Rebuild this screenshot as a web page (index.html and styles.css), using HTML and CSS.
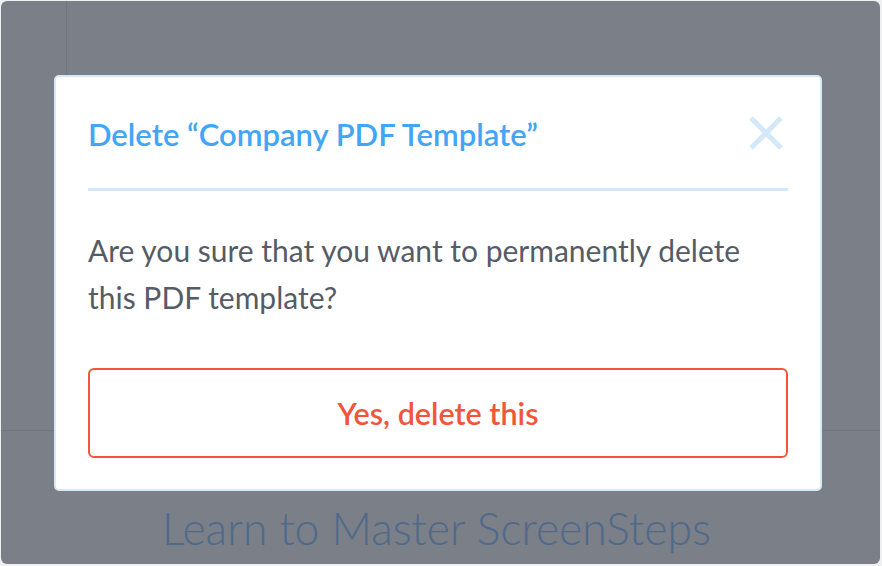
FILE: index.html
```html
<!DOCTYPE html>
<html>
<head>
<meta charset="utf-8">
<link rel="stylesheet" href="styles.css">
</head>
<body>
<div class="frame">
  <div class="page-top">
    <div class="sidebar"></div>
    <div class="main"></div>
  </div>
  <div class="page-bottom">
    <h1 class="hero">Learn to Master ScreenSteps</h1>
  </div>
  <div class="modal">
    <div class="modal-header">
      <h2 class="modal-title">Delete “Company PDF Template”</h2>
      <button class="close" aria-label="Close">
        <svg width="36" height="36" viewBox="0 0 36 36"><path d="M3 3 L33 33 M33 3 L3 33" stroke="#d3e8f9" stroke-width="5" fill="none"/></svg>
      </button>
    </div>
    <p class="modal-text">Are you sure that you want to permanently delete this PDF template?</p>
    <button class="danger">Yes, delete this</button>
  </div>
</div>
</body>
</html>
```
FILE: styles.css
```css
html, body { margin: 0; padding: 0; }
body {
  background: #eef0f2;
  width: 882px;
  height: 566px;
  font-family: Lato, "Open Sans", sans-serif;
}
.frame {
  position: relative;
  margin: 1px 2px 1px 1px;
  height: 563px;
  background: #7a7f88;
  border-radius: 6px;
  overflow: hidden;
  display: flex;
  flex-direction: column;
}
.page-top {
  height: 429px;
  border-bottom: 1px solid #71767f;
  display: flex;
}
.sidebar {
  width: 65px;
  border-right: 1px solid #71767f;
}
.main { flex: 1; }
.page-bottom {
  flex: 1;
  display: flex;
  justify-content: center;
  padding-right: 8px;
}
.hero {
  margin: 72px 0 0 0;
  font-weight: 300;
  font-size: 44.5px;
  line-height: 50px;
  color: #50698a;
}
.modal {
  position: absolute;
  left: 53px;
  top: 74px;
  width: 700px;
  height: 412px;
  background: #fff;
  border: 2px solid #d6e9f8;
  border-radius: 5px;
  padding: 0 32px;
  box-sizing: content-box;
  display: flex;
  flex-direction: column;
}
.modal-header {
  height: 111px;
  border-bottom: 3px solid #d3e8f9;
  display: flex;
  align-items: center;
  justify-content: space-between;
}
.modal-title {
  margin: 0;
  font-size: 31px;
  font-weight: 600;
  color: #42a5f5;
  padding-top: 2px;
}
.close {
  background: none;
  border: 0;
  padding: 0;
  margin-right: 4px;
  width: 36px;
  height: 36px;
  display: flex;
}
.modal-text {
  margin: 36px 0 0 0;
  font-size: 30px;
  line-height: 47px;
  color: #555c66;
}
.danger {
  margin-top: 47px;
  height: 90px;
  width: 100%;
  background: #fff;
  border: 2px solid #f2553a;
  border-radius: 6px;
  color: #f2553a;
  font-family: inherit;
  font-size: 30.5px;
  font-weight: 600;
}
```
